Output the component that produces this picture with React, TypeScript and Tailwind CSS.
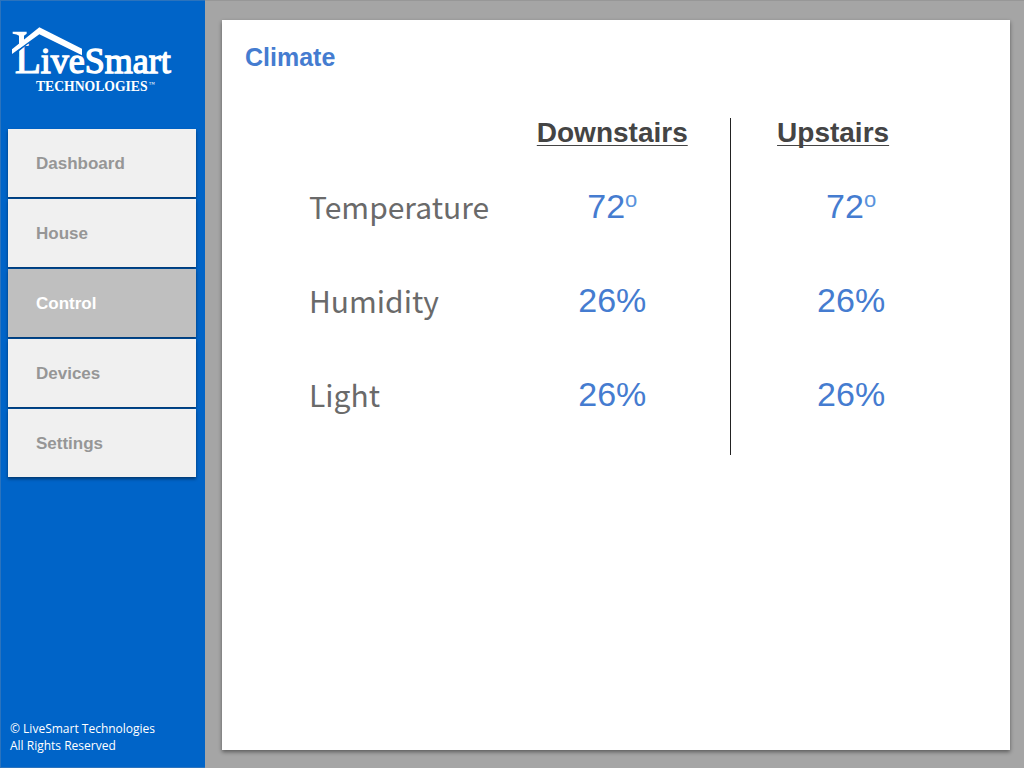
const navItems = ["Dashboard", "House", "Control", "Devices", "Settings"];

const readings = [
  { label: "Temperature", downstairs: "72", upstairs: "72", degrees: true },
  { label: "Humidity", downstairs: "26%", upstairs: "26%", degrees: false },
  { label: "Light", downstairs: "26%", upstairs: "26%", degrees: false },
];

function Logo() {
  return (
    <svg
      viewBox="3 0 615 270"
      className="block h-[90px] w-[205px] shrink-0"
      fill="#ffffff"
      role="img"
      aria-label="LiveSmart Technologies"
    >
      <text x="44" y="173" fontSize="130" stroke="#ffffff" strokeWidth="3" className="font-['Liberation_Serif',serif]">
        L
      </text>
      <text x="122" y="173" fontSize="108" stroke="#ffffff" strokeWidth="4" className="font-['Liberation_Serif',serif]">
        iveSmart
      </text>
      <path d="M34 84H57V125H34Z" fill="#0064c8" />
      <path d="M34 123L118 56L246 122" fill="none" stroke="#0064c8" strokeWidth="6" />
      <path d="M38 50H80V56L72 62V86L57 98V62Q52 57 38 56Z" />
      <path d="M36 103L118 37L246 101V121L118 58L36 117Z" />
      <text x="108" y="228" fontSize="41" fontWeight="700" className="font-['Liberation_Serif',serif]">
        TECHNOLOGIES
      </text>
      <text x="446" y="212" fontSize="18" className="font-['Liberation_Serif',serif]">
        ™
      </text>
    </svg>
  );
}

function Value({ value, degrees }: { value: string; degrees: boolean }) {
  return (
    <span className="text-[34px] leading-10 text-[#457cd0]">
      {value}
      {degrees && <sup className="text-[22px] leading-none text-[#5a93dc]">o</sup>}
    </span>
  );
}

export default function App() {
  return (
    <div className="flex min-h-screen bg-[#a5a5a5] font-['Liberation_Sans',Arial,sans-serif]">
      <aside className="flex w-[205px] shrink-0 flex-col border border-[#2b73bd] border-r-0 bg-[#0064c8]">
        <div className="pt-[14px]">
          <Logo />
        </div>
        <nav className="mt-6 flex flex-col gap-[2px] pr-[9px] pl-[7px]">
          {navItems.map((item) => (
            <a
              key={item}
              href="#"
              aria-current={item === "Control" ? "page" : undefined}
              className={
                item === "Control"
                  ? "flex h-[68px] items-center bg-[#bfbfbf] pt-[2px] pl-7 text-[17px] font-bold text-white shadow-[0_2px_3px_rgba(0,0,0,0.45)]"
                  : "flex h-[68px] items-center bg-[#f0f0f0] pt-[2px] pl-7 text-[17px] font-bold text-[#969696] shadow-[0_2px_3px_rgba(0,0,0,0.45)]"
              }
            >
              {item}
            </a>
          ))}
        </nav>
        <footer className="mt-auto pb-[13px] pl-[9px] font-['Open_Sans',sans-serif] text-[12px] leading-[17px] text-white">
          © LiveSmart Technologies
          <br />
          All Rights Reserved
        </footer>
      </aside>
      <main className="flex flex-1 border-t border-[#979797] pt-[19px] pr-[14px] pb-[18px] pl-[17px]">
        <section className="flex-1 bg-white shadow-[0_2px_4px_rgba(0,0,0,0.45)]">
          <h1 className="pt-[21px] pl-[23px] text-[25px] leading-8 font-bold text-[#457cd0]">Climate</h1>
          <div className="pt-[45px] pr-[39px] pl-[87px]">
            <table className="w-full table-fixed border-collapse">
              <thead>
                <tr className="h-[43px] align-top text-[28px] leading-7 font-bold text-[#444444]">
                  <td className="w-[28%]" />
                  <th
                    scope="col"
                    className="w-[35.7%] pt-px underline decoration-1 underline-offset-3 [text-decoration-skip-ink:none]"
                  >
                    Downstairs
                  </th>
                  <th
                    scope="col"
                    className="w-[36.3%] border-l border-[#222222] pt-px pr-9 underline decoration-1 underline-offset-3 [text-decoration-skip-ink:none]"
                  >
                    Upstairs
                  </th>
                </tr>
              </thead>
              <tbody>
                {readings.map((row) => (
                  <tr key={row.label} className="h-[94px] align-top last:h-[106px]">
                    <th
                      scope="row"
                      className="pt-[25px] text-left font-['Noto_Sans_CJK_SC',sans-serif] text-[30px] leading-10 font-normal text-[#6a6a6a]"
                    >
                      {row.label}
                    </th>
                    <td className="pt-[25px] text-center">
                      <Value value={row.downstairs} degrees={row.degrees} />
                    </td>
                    <td className="border-l border-[#222222] pt-[25px] text-center">
                      <Value value={row.upstairs} degrees={row.degrees} />
                    </td>
                  </tr>
                ))}
              </tbody>
            </table>
          </div>
        </section>
      </main>
    </div>
  );
}
